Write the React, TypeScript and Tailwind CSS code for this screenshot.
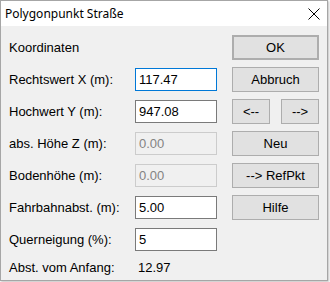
const fields = [
  { label: 'Rechtswert X (m):', value: '117.47', state: 'focus' },
  { label: 'Hochwert Y (m):', value: '947.08', state: 'normal' },
  { label: 'abs. Höhe Z (m):', value: '0.00', state: 'disabled' },
  { label: 'Bodenhöhe (m):', value: '0.00', state: 'disabled' },
  { label: 'Fahrbahnabst. (m):', value: '5.00', state: 'normal' },
  { label: 'Querneigung (%):', value: '5', state: 'normal' },
];

function Field({ label, value, state }: { label: string; value: string; state: string }) {
  const box =
    state === 'focus'
      ? 'border-[#0078d7] bg-white text-black'
      : state === 'disabled'
        ? 'border-[#cccccc] bg-[#f0f0f0] text-[#838383]'
        : 'border-[#7a7a7a] bg-white text-black';
  return (
    <div className="flex h-[23px] items-center">
      <span className="w-[126px]">{label}</span>
      <div className={`flex h-[23px] w-[82px] items-center border pl-[3px] ${box}`}>{value}</div>
    </div>
  );
}

function Btn({ children, className = '' }: { children: React.ReactNode; className?: string }) {
  return (
    <div
      className={`flex h-[25px] items-center justify-center border border-[#adadad] bg-[#e1e1e1] text-black ${className}`}
    >
      {children}
    </div>
  );
}

export default function App() {
  return (
    <div className="h-[282px] w-[330px] bg-white">
      <div className="flex h-[281px] w-[328px] flex-col border border-[#a6a6a6] shadow-[1px_1px_2px_rgba(0,0,0,0.25)]">
        {/* Title bar */}
        <div className="flex h-[25px] shrink-0 items-center justify-between bg-white pl-[4px] pr-[7px]">
          <span className="text-[12px] text-black" style={{ fontFamily: '"Noto Sans", sans-serif' }}>
            Polygonpunkt Straße
          </span>
          <svg width="12" height="12" viewBox="0 0 12 12" className="mt-[1px]">
            <path d="M0.5 0.5 L11.5 11.5 M11.5 0.5 L0.5 11.5" stroke="#000" strokeWidth="1" />
          </svg>
        </div>

        {/* Body */}
        <div
          className="flex flex-1 bg-[#f0f0f0] text-[13px] text-black"
          style={{ fontFamily: '"Liberation Sans", Arial, sans-serif' }}
        >
          <div className="flex flex-col gap-[9px] pl-[8px] pt-[10px]">
            <div className="flex h-[23px] items-center">Koordinaten</div>
            {fields.map((f) => (
              <Field key={f.label} {...f} />
            ))}
            <div className="flex h-[16px] items-center">
              <span className="w-[126px]">Abst. vom Anfang:</span>
              <span className="whitespace-nowrap pl-[3px]">12.97</span>
            </div>
          </div>

          <div className="ml-[15px] flex w-[87px] flex-col gap-[7px] pt-[9px]">
            <Btn className="border-2 border-[#0078d7]">OK</Btn>
            <Btn>Abbruch</Btn>
            <div className="flex justify-between">
              <Btn className="w-[38px]">&lt;--</Btn>
              <Btn className="w-[38px]">--&gt;</Btn>
            </div>
            <Btn>Neu</Btn>
            <Btn>--&gt; RefPkt</Btn>
            <Btn>Hilfe</Btn>
          </div>
        </div>
      </div>
    </div>
  );
}
